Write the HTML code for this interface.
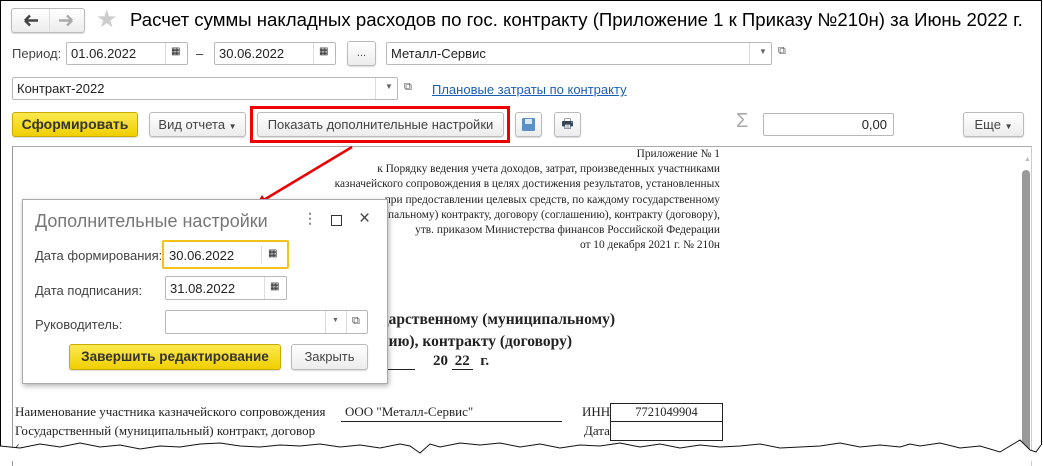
<!DOCTYPE html>
<html><head><meta charset="utf-8"><style>
*{box-sizing:border-box}
body{margin:0;width:1043px;height:461px;overflow:hidden;background:#fff;font-family:"Liberation Sans",sans-serif;font-size:13px;color:#333;position:relative}
.a{position:absolute}
.btn{position:absolute;border:1px solid #bbb;border-radius:3px;background:linear-gradient(#fff,#ececec);box-shadow:0 1px 1px rgba(0,0,0,.15);text-align:center;color:#444}
.inp{position:absolute;border:1px solid #b8b8b8;border-radius:2px;background:#fff;color:#222}
.sep{position:absolute;top:0;bottom:0;border-left:1px solid #ddd}
.s{font-family:"Liberation Serif",serif;color:#222;position:absolute;white-space:nowrap}
.y{background:linear-gradient(#fbe94f,#f0cf00);border-color:#c9ab00;color:#333;font-weight:bold}
</style></head><body>
<div class="a" style="left:0;top:0;width:1042px;height:461px;border-left:1px solid #000;border-top:1px solid #000;border-right:1px solid #000"></div>
<div class="btn" style="left:11px;top:8px;width:74px;height:25px;"><div class="sep" style="left:37px"></div>
<svg class="a" style="left:0;top:0" width="72" height="23"><path d="M13 11.5h13M13 11.5l5-5M13 11.5l5 5" stroke="#444" stroke-width="2.5" fill="none"/><path d="M47 11.5h13M60 11.5l-5-5M60 11.5l-5 5" stroke="#aaa" stroke-width="2.5" fill="none"/></svg></div>
<div class="a" style="left:96px;top:5px;font-size:24px;color:#ccc">★</div>
<div class="a" style="left:130px;top:9px;font-size:18.6px;color:#000;white-space:nowrap">Расчет суммы накладных расходов по гос. контракту (Приложение 1 к Приказу №210н) за Июнь 2022 г.</div>

<div class="a" style="left:12px;top:46px;color:#444">Период:</div>
<div class="inp" style="left:66px;top:42px;width:122px;height:23px;padding:3px 4px">01.06.2022<div class="sep" style="left:98px"></div><span class="a" style="left:104px;top:3px;font-size:10px">▦</span></div>
<div class="a" style="left:196px;top:46px">–</div>
<div class="inp" style="left:214px;top:42px;width:122px;height:23px;padding:3px 4px">30.06.2022<div class="sep" style="left:98px"></div><span class="a" style="left:104px;top:3px;font-size:10px">▦</span></div>
<div class="btn" style="left:347px;top:41px;width:29px;height:25px;font-size:11px;line-height:22px">...</div>
<div class="inp" style="left:386px;top:42px;width:386px;height:23px;padding:3px 4px">Металл-Сервис<div class="sep" style="left:362px"></div><span class="a" style="left:372px;top:4px;font-size:8px;color:#666">▼</span></div>
<div class="a" style="left:778px;top:45px;font-size:11px;color:#555">⧉</div>

<div class="inp" style="left:12px;top:77px;width:386px;height:23px;padding:3px 4px">Контракт-2022<div class="sep" style="left:362px"></div><span class="a" style="left:372px;top:4px;font-size:8px;color:#666">▼</span></div>
<div class="a" style="left:404px;top:81px;font-size:11px;color:#555">⧉</div>
<div class="a" style="left:432px;top:82px;color:#1a5fb4;text-decoration:underline">Плановые затраты по контракту</div>

<div class="btn y" style="left:12px;top:112px;width:126px;height:25px;line-height:23px;font-size:14px">Сформировать</div>
<div class="btn" style="left:149px;top:112px;width:97px;height:25px;line-height:23px">Вид отчета <span style="font-size:8px">▼</span></div>
<div class="btn" style="left:257px;top:112px;width:247px;height:25px;line-height:23px">Показать дополнительные настройки</div>
<div class="a" style="left:250px;top:106px;width:260px;height:37px;border:3px solid #e00"></div>
<div class="btn" style="left:515px;top:112px;width:27px;height:25px"><div class="a" style="left:6px;top:5px;width:13px;height:13px;background:#5b8fc7;border-radius:1px"><div class="a" style="left:3px;top:1px;width:7px;height:5px;background:#dde8f4"></div></div></div>
<div class="btn" style="left:554px;top:112px;width:27px;height:25px;font-size:13px;line-height:22px;color:#345">🖶</div>
<div class="a" style="left:736px;top:110px;font-size:20px;color:#aaa">Σ</div>
<div class="inp" style="left:763px;top:113px;width:131px;height:23px;text-align:right;padding:3px 6px">0,00</div>
<div class="btn" style="left:963px;top:112px;width:61px;height:25px;line-height:23px">Еще <span style="font-size:8px">▼</span></div>

<div class="a" style="left:12px;top:146px;width:1020px;height:320px;border-left:1px solid #999;border-top:1px solid #aaa;border-right:1px solid #ccc"></div>
<div class="a" style="left:1024px;top:156px;font-size:7px;color:#bbb">▲</div>
<div class="a" style="left:1022px;top:170px;width:8px;height:290px;background:#999;border-radius:4px 4px 0 0"></div>

<div class="s" style="right:323px;top:148px;font-size:11.4px">Приложение № 1</div>
<div class="s" style="right:323px;top:163px;font-size:11.4px">к Порядку ведения учета доходов, затрат, произведенных участниками</div>
<div class="s" style="right:323px;top:178px;font-size:11.4px">казначейского сопровождения в целях достижения результатов, установленных</div>
<div class="s" style="right:323px;top:194px;font-size:11.4px">при предоставлении целевых средств, по каждому государственному</div>
<div class="s" style="right:323px;top:209px;font-size:11.4px">пальному) контракту, договору (соглашению), контракту (договору),</div>
<div class="s" style="right:323px;top:224px;font-size:11.4px">утв. приказом Министерства финансов Российской Федерации</div>
<div class="s" style="right:323px;top:239px;font-size:11.4px">от 10 декабря 2021 г. № 210н</div>
<div class="s" style="left:370px;top:288px;font-size:15px;font-weight:bold">т</div>
<div class="s" style="right:428px;top:311px;font-size:15.5px;font-weight:bold">государственному (муниципальному)</div>
<div class="s" style="right:471px;top:333px;font-size:15.5px;font-weight:bold">(соглашению), контракту (договору)</div>
<div class="a" style="left:370px;top:369px;width:45px;border-top:1px solid #222"></div>
<div class="s" style="left:433px;top:353px;font-size:15px;font-weight:bold">20 <span style="border-bottom:1px solid #222;padding:0 3px">22</span>&nbsp; г.</div>

<div class="s" style="left:15px;top:404px;font-size:13px">Наименование участника казначейского сопровождения</div>
<div class="s" style="left:345px;top:404px;font-size:13px">ООО "Металл-Сервис"</div>
<div class="a" style="left:341px;top:421px;width:221px;border-top:1px solid #222"></div>
<div class="s" style="left:582px;top:404px;font-size:13px">ИНН</div>
<div class="a" style="left:610px;top:403px;width:113px;height:19px;border:1px solid #222;font-family:'Liberation Serif',serif;font-size:12.5px;text-align:center;line-height:17px;color:#222">7721049904</div>
<div class="a" style="left:610px;top:421px;width:113px;height:20px;border:1px solid #222;border-top:none"></div>
<div class="s" style="left:15px;top:423px;font-size:13px">Государственный (муниципальный) контракт, договор</div>
<div class="s" style="left:584px;top:423px;font-size:13px">Дата</div>
<div class="s" style="left:15px;top:441px;font-size:13px">(соглаш</div>

<svg class="a" style="left:0;top:0" width="1043" height="461"><line x1="352" y1="147" x2="262" y2="201" stroke="#e00" stroke-width="2.5"/><polygon points="256,205 262,195 267,202" fill="#e00"/>
<polygon fill="#fff" stroke="none" points="0,461 0,446 20,448 40,444 60,447 80,443 100,447 120,445 140,449 160,446 180,447 200,444 220,443 240,446 260,447 280,445 300,446 320,444 340,447 360,445 380,448 400,444 410,446 420,453 430,444 440,447 460,443 480,445 500,443 520,447 540,444 560,448 580,445 600,446 620,443 640,447 660,444 680,448 700,445 720,447 740,446 760,444 780,448 800,447 820,446 840,443 860,447 880,445 900,447 910,444 920,446 940,443 960,448 980,446 1000,452 1020,440 1030,450 1036,452 1041,445 1043,445 1043,461"/>
<polyline fill="none" stroke="#111" stroke-width="1" points="0,446 20,448 40,444 60,447 80,443 100,447 120,445 140,449 160,446 180,447 200,444 220,443 240,446 260,447 280,445 300,446 320,444 340,447 360,445 380,448 400,444 410,446 420,453 430,444 440,447 460,443 480,445 500,443 520,447 540,444 560,448 580,445 600,446 620,443 640,447 660,444 680,448 700,445 720,447 740,446 760,444 780,448 800,447 820,446 840,443 860,447 880,445 900,447 910,444 920,446 940,443 960,448 980,446 1000,452 1020,440 1030,450 1036,452 1041,445"/></svg>

<div class="a" style="left:22px;top:199px;width:366px;height:185px;background:#fff;border:1px solid #aaa;box-shadow:1px 2px 5px rgba(0,0,0,.3)">
<div class="a" style="left:12px;top:11px;font-size:18px;color:#777;white-space:nowrap">Дополнительные настройки</div>
<div class="a" style="left:280px;top:10px;font-size:14px;color:#888;font-weight:bold">⋮</div>
<div class="a" style="left:308px;top:15px;width:11px;height:11px;border:1.5px solid #333"></div>
<div class="a" style="left:336px;top:8px;font-size:19px;color:#444">×</div>
<div class="a" style="left:12px;top:48px;color:#444">Дата формирования:</div>
<div class="inp" style="left:139px;top:40px;width:127px;height:29px;border:2px solid #f3c31b;padding:6px 5px">30.06.2022<div class="sep" style="left:97px;top:4px;bottom:4px"></div><span class="a" style="left:104px;top:6px;font-size:10px">▦</span></div>
<div class="a" style="left:12px;top:83px;color:#444">Дата подписания:</div>
<div class="inp" style="left:142px;top:76px;width:122px;height:24px;padding:4px 4px">31.08.2022<div class="sep" style="left:98px"></div><span class="a" style="left:104px;top:4px;font-size:10px">▦</span></div>
<div class="a" style="left:12px;top:117px;color:#444">Руководитель:</div>
<div class="inp" style="left:142px;top:110px;width:203px;height:24px"><div class="sep" style="left:159px"></div><span class="a" style="left:166px;top:6px;font-size:7px;color:#666">▼</span><div class="sep" style="left:180px"></div><span class="a" style="left:186px;top:4px;font-size:11px;color:#555">⧉</span></div>
<div class="btn y" style="left:46px;top:144px;width:212px;height:26px;line-height:24px;font-size:13.5px">Завершить редактирование</div>
<div class="btn" style="left:268px;top:144px;width:77px;height:26px;line-height:24px">Закрыть</div>
</div>
</body></html>
